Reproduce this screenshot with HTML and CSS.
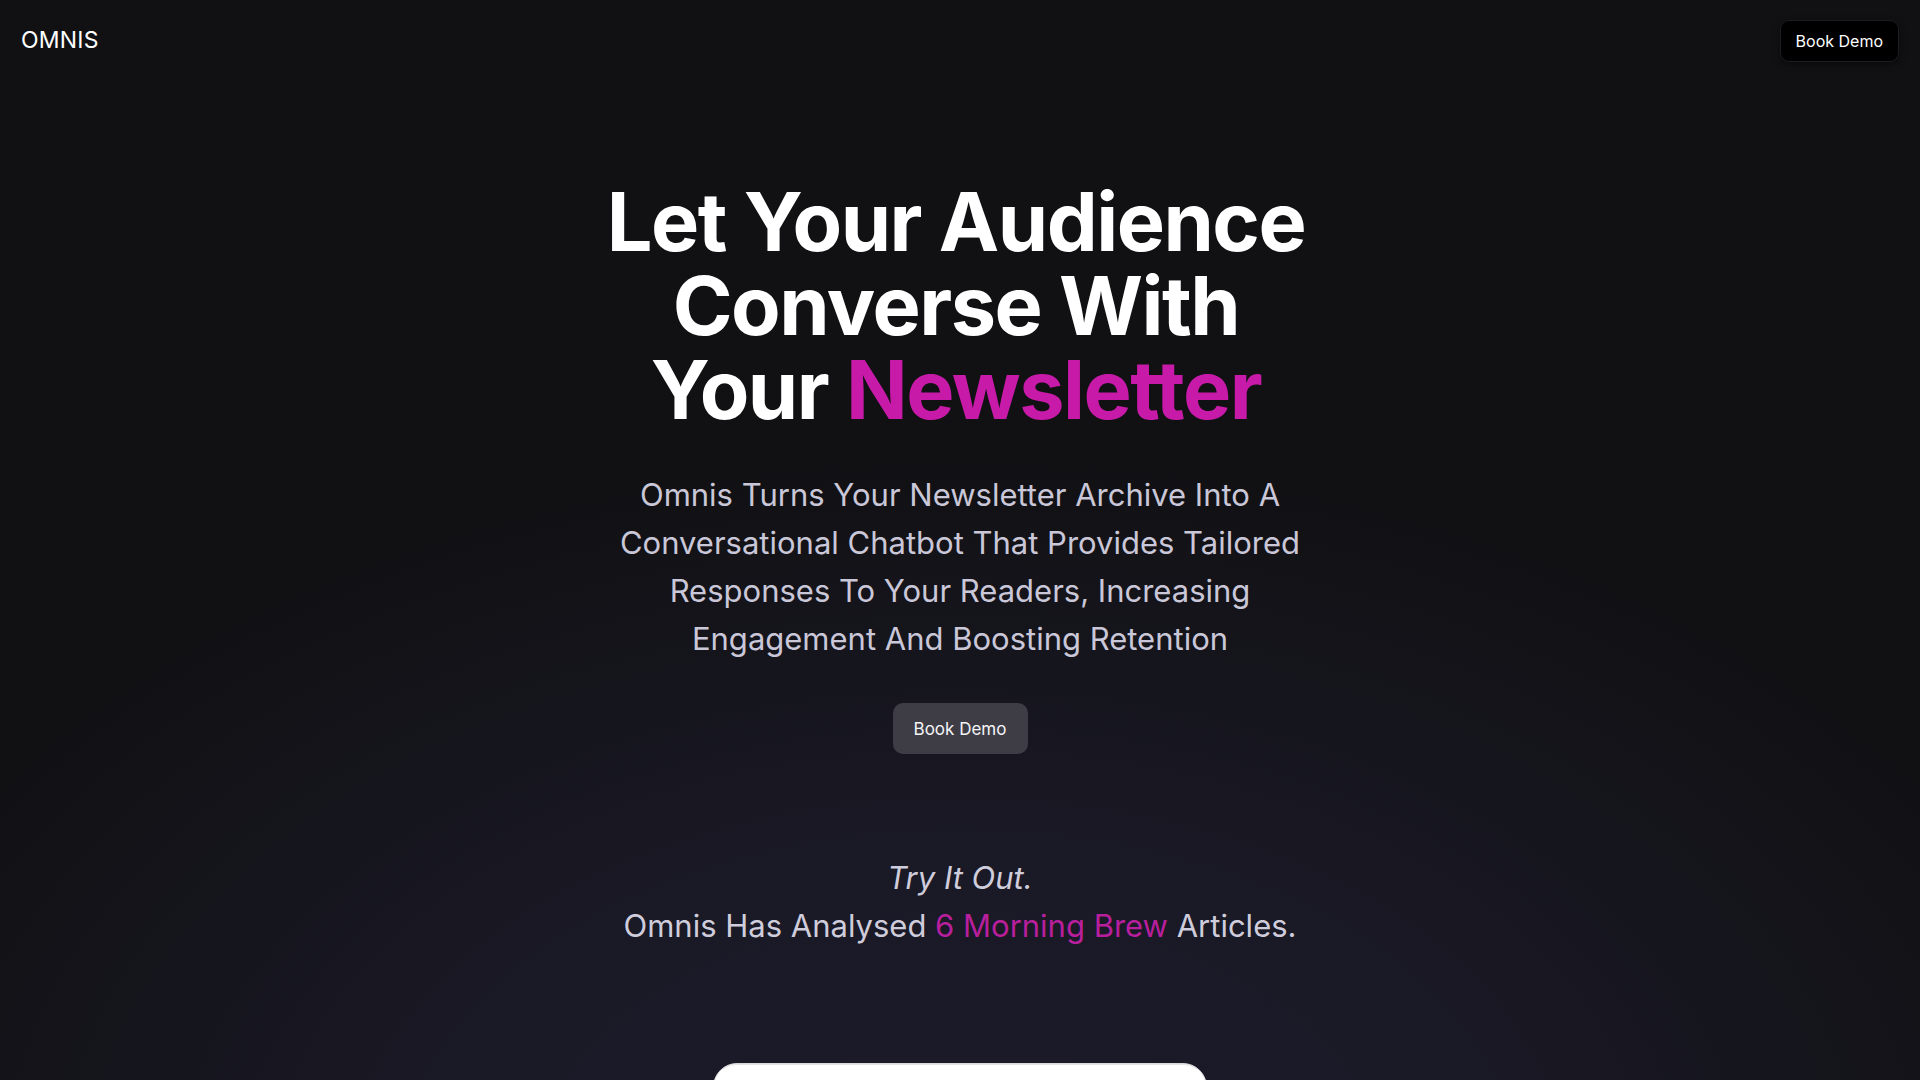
FILE: index.html
```
<!DOCTYPE html>
<html lang="en">
<head>
    <meta charset="UTF-8">
    <meta name="viewport" content="width=device-width, initial-scale=1.0">
    <title>Omnis</title>
    <link rel="stylesheet" href="styles.css">
</head>
<body>
    <header class="top-bar">
        <div class="logo">OMNIS</div>
        <button class="nav-btn">Book Demo</button>
    </header>

    <main class="hero">
        <h1 class="hero-title">
            Let Your Audience<br>
            Converse With<br>
            Your <span class="accent">Newsletter</span>
        </h1>
        <p class="hero-text">
            Omnis Turns Your Newsletter Archive Into A<br>
            Conversational Chatbot That Provides Tailored<br>
            Responses To Your Readers, Increasing<br>
            Engagement And Boosting Retention
        </p>
        <button class="demo-btn">Book Demo</button>

        <section class="try-it">
            <p class="try-title">Try It Out.</p>
            <p class="try-count">Omnis Has Analysed <span class="accent-soft">6 Morning Brew</span> Articles.</p>
        </section>

        <div class="chat-card"></div>
    </main>
</body>
</html>
```

FILE: styles.css
```
html, body {
    margin: 0;
    padding: 0;
    height: 100%;
    overflow: hidden;
}
body {
    font-family: Inter, "Noto Sans", sans-serif;
    color: #ffffff;
    background-color: #111114;
    background-image: radial-gradient(ellipse 1150px 720px at 50% 1180px, #1c1a29 0%, #1a1926 45%, #111114 100%);
}
.top-bar {
    display: flex;
    justify-content: space-between;
    align-items: flex-start;
    padding: 20px 21px 0 21px;
    height: 58px;
    box-sizing: content-box;
}
.logo {
    font-size: 23px;
    letter-spacing: 0.2px;
    color: #ffffff;
    margin-top: 6px;
}
.nav-btn {
    font-family: Inter, sans-serif;
    font-size: 16px;
    color: #ffffff;
    background-color: #000000;
    border: 1px solid #1d1d20;
    border-radius: 9px;
    padding: 10px 15px;
    box-shadow: 0 2px 6px rgba(0,0,0,0.5);
    cursor: pointer;
}
.hero {
    display: flex;
    flex-direction: column;
    align-items: center;
    text-align: center;
}
.hero-title {
    font-family: Inter, sans-serif;
    font-size: 81px;
    font-weight: 700;
    line-height: 84px;
    letter-spacing: -1.5px;
    margin: 102px 0 0 -8px;
    color: #ffffff;
}
.accent {
    color: #c81aa8;
}
.hero-text {
    font-family: Inter, sans-serif;
    font-size: 31px;
    font-weight: 400;
    line-height: 48px;
    color: #c9c7d8;
    margin: 39px 0 0 0;
}
.demo-btn {
    font-family: Inter, sans-serif;
    font-size: 17px;
    color: #f4f4f6;
    background-color: #3e3d46;
    border: none;
    border-radius: 10px;
    width: 135px;
    height: 51px;
    margin-top: 40px;
    cursor: pointer;
}
.try-it {
    margin-top: 100px;
}
.try-it p {
    margin: 0;
    font-size: 31px;
    line-height: 48px;
    color: #cfcddc;
}
.try-title {
    font-style: italic;
}
.accent-soft {
    color: #b81f9c;
}
.chat-card {
    width: 492px;
    height: 200px;
    margin-top: 113px;
    background-color: #ffffff;
    border: 1px solid #d9d9d9;
    border-radius: 24px 24px 0 0;
    box-shadow: inset 0 6px 0 -5px #e3e3e3;
}
```
